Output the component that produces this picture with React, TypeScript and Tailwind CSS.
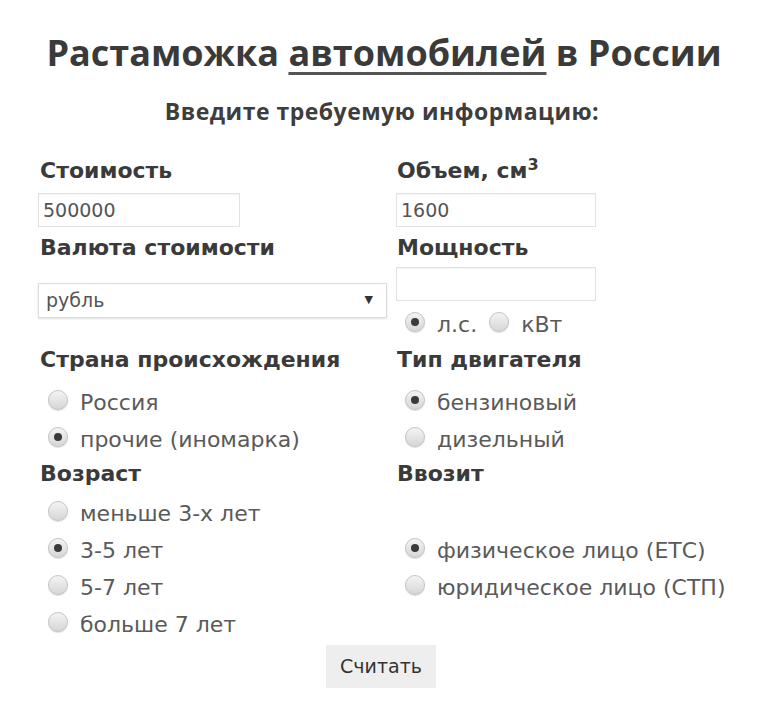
import React from "react";

const sans = { fontFamily: '"DejaVu Sans", Verdana, sans-serif' };

function Radio({ checked }: { checked?: boolean }) {
  return (
    <span className="relative mr-[12px] inline-flex h-[20px] w-[20px] shrink-0 items-center justify-center rounded-full border border-[#c4c4c4] bg-gradient-to-b from-[#f4f4f4] to-[#d6d6d6] shadow-[0_1px_1px_rgba(0,0,0,0.15)]">
      {checked && <span className="h-[8px] w-[8px] rounded-full bg-[#3a3a3a]" />}
    </span>
  );
}

function Option({ label, checked }: { label: string; checked?: boolean }) {
  return (
    <div className="flex h-[37px] items-center text-[22px] text-[#5a5a5a]">
      <Radio checked={checked} />
      <span className="relative top-[3px]">{label}</span>
    </div>
  );
}

function Label({ children, className = "" }: { children: React.ReactNode; className?: string }) {
  return (
    <div className={"h-[30px] text-[22px] font-bold leading-[30px] text-[#3a3a3a] " + className}>
      {children}
    </div>
  );
}

function TextInput({ value, className = "" }: { value?: string; className?: string }) {
  return (
    <div
      className={
        "flex h-[34px] items-center border border-[#e2e2e2] bg-white px-[4px] text-[19px] text-[#555] shadow-[inset_0_1px_1px_rgba(0,0,0,0.05)] " +
        className
      }
    >
      {value}
    </div>
  );
}

export default function App() {
  return (
    <div className="min-h-[712px] w-[768px] bg-white" style={sans}>
      <h1
        className="pt-[28px] text-center text-[36px] font-bold leading-[50px] text-[#3a3a3a]"
        style={{ fontFamily: '"Open Sans", sans-serif' }}
      >
        Растаможка{" "}
        <span className="underline decoration-[#555] decoration-[3px] underline-offset-[6px]">автомобилей</span> в
        России
      </h1>
      <div
        className="mt-[18px] pr-[4px] text-center text-[23px] font-bold leading-[30px] tracking-[0.5px] text-[#3d3d3d]"
        style={{ fontFamily: '"Open Sans", sans-serif' }}
      >
        Введите требуемую информацию:
      </div>

      <div className="mt-[30px] grid grid-cols-[358px_1fr] pl-[38px]">
        <div className="flex flex-col">
          <Label className="pl-[2px]">Стоимость</Label>
          <TextInput value="500000" className="mt-[7px] w-[202px]" />
          <Label className="mt-[6px] pl-[2px]">Валюта стоимости</Label>
          <div className="mt-[20px] flex h-[35px] w-[349px] items-center justify-between border border-[#dcdcdc] bg-white pl-[7px] pr-[13px] text-[19px] text-[#555] shadow-[0_1px_2px_rgba(0,0,0,0.12)]">
            <span>рубль</span>
            <span className="text-[11px] text-[#333]">▼</span>
          </div>
          <Label className="mt-[27px] pl-[2px]">Страна происхождения</Label>
          <div className="mt-[6px] pl-[10px]">
            <Option label="Россия" />
            <Option label="прочие (иномарка)" checked />
          </div>
          <Label className="h-[37px] pl-[2px] leading-[37px]">Возраст</Label>
          <div className="pl-[10px]">
            <Option label="меньше 3-х лет" />
            <Option label="3-5 лет" checked />
            <Option label="5-7 лет" />
            <Option label="больше 7 лет" />
          </div>
        </div>

        <div className="flex flex-col">
          <Label className="pl-[1px]">
            Объем, см<sup className="text-[16px]">3</sup>
          </Label>
          <TextInput value="1600" className="mt-[7px] w-[200px]" />
          <Label className="mt-[6px] pl-[1px]">Мощность</Label>
          <TextInput className="mt-[4px] w-[200px]" />
          <div className="mt-[2px] flex h-[37px] items-center pl-[9px] text-[22px] text-[#5a5a5a]">
            <Radio checked />
            <span className="relative top-[3px] mr-[12px]">л.с.</span>
            <Radio />
            <span className="relative top-[3px]">кВт</span>
          </div>
          <Label className="mt-[5px] pl-[1px]">Тип двигателя</Label>
          <div className="mt-[6px] pl-[9px]">
            <Option label="бензиновый" checked />
            <Option label="дизельный" />
          </div>
          <Label className="h-[37px] pl-[1px] leading-[37px]">Ввозит</Label>
          <div className="h-[37px]" />
          <div className="pl-[9px]">
            <Option label="физическое лицо (ЕТС)" checked />
            <Option label="юридическое лицо (СТП)" />
          </div>
        </div>
      </div>

      <div className="mt-[5px] flex justify-center">
        <button className="ml-[-6px] h-[43px] w-[110px] bg-[#eeeeee] text-[19px] text-[#333]" style={sans}>
          Считать
        </button>
      </div>
    </div>
  );
}
